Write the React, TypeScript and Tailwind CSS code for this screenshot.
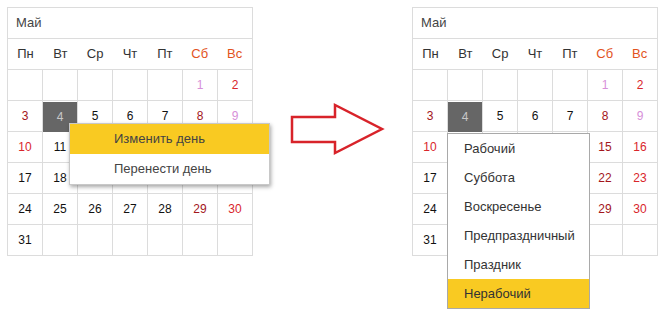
import React from "react";

type Day = { n?: number; kind?: "sat" | "sun" | "pink" | "red" | "sel" };

const weeks: Day[][] = [
  [{}, {}, {}, {}, {}, { n: 1, kind: "pink" }, { n: 2, kind: "sun" }],
  [
    { n: 3, kind: "sat" },
    { n: 4, kind: "sel" },
    { n: 5 },
    { n: 6 },
    { n: 7 },
    { n: 8, kind: "sat" },
    { n: 9, kind: "pink" },
  ],
  [
    { n: 10, kind: "sun" },
    { n: 11 },
    { n: 12 },
    { n: 13 },
    { n: 14 },
    { n: 15, kind: "sat" },
    { n: 16, kind: "sun" },
  ],
  [
    { n: 17 },
    { n: 18 },
    { n: 19 },
    { n: 20 },
    { n: 21 },
    { n: 22, kind: "sat" },
    { n: 23, kind: "sun" },
  ],
  [
    { n: 24 },
    { n: 25 },
    { n: 26 },
    { n: 27 },
    { n: 28 },
    { n: 29, kind: "sat" },
    { n: 30, kind: "sun" },
  ],
  [{ n: 31 }, {}, {}, {}, {}, {}, {}],
];

const dayNames = ["Пн", "Вт", "Ср", "Чт", "Пт", "Сб", "Вс"];

function cellClass(kind?: Day["kind"]) {
  switch (kind) {
    case "sat":
      return "text-[#a3161c]";
    case "sun":
      return "text-[#d9262b]";
    case "pink":
      return "text-[#d78fd9]";
    case "sel":
      return "bg-[#666666] text-[#c8c8c8]";
    default:
      return "text-[#111]";
  }
}

function Calendar({ children }: { children?: React.ReactNode }) {
  return (
    <div className="relative w-[246px] border-t border-l border-[#dcdcdc] bg-white">
      <div className="flex h-[31px] items-center border-r border-b border-[#dcdcdc] pl-[8px] text-[13px] text-[#444]">
        Май
      </div>
      <div className="grid h-[31px] grid-cols-7 border-r border-b border-[#dcdcdc] text-[13px]">
        {dayNames.map((d, i) => (
          <div
            key={d}
            className={`flex items-center justify-center ${
              i >= 5 ? "text-[#e2531d]" : "text-[#333]"
            }`}
          >
            {d}
          </div>
        ))}
      </div>
      {weeks.map((week, wi) => (
        <div key={wi} className="grid grid-cols-7">
          {week.map((day, di) => (
            <div
              key={di}
              className="h-[31px] border-r border-b border-[#dcdcdc]"
            >
              <div
                className={`flex h-full items-center justify-center text-[12px] ${cellClass(
                  day.kind
                )} ${day.kind === "sel" ? "mt-px h-[29px]" : ""}`}
              >
                {day.n}
              </div>
            </div>
          ))}
        </div>
      ))}
      {children}
    </div>
  );
}

export default function App() {
  return (
    <div
      className="flex h-[313px] w-[664px] items-start bg-white pt-[7px] pl-[7px]"
      style={{ fontFamily: '"Liberation Sans", Arial, sans-serif' }}
    >
      <Calendar>
        <div className="absolute top-[115px] left-[61px] w-[201px] border border-[#c8c8c8] bg-white text-[13px] text-[#444] shadow-[1px_2px_4px_rgba(0,0,0,0.35)]">
          <div className="flex h-[30px] items-center bg-[#f9ca22] pl-[44px]">
            Изменить день
          </div>
          <div className="flex h-[30px] items-center pl-[44px]">
            Перенести день
          </div>
        </div>
      </Calendar>

      <svg
        width="96"
        height="60"
        viewBox="0 0 96 60"
        className="mt-[93px] ml-[37px] mr-[26px]"
      >
        <polygon
          points="2,17 45,17 45,5 92,29 45,53 45,42 2,42"
          fill="white"
          stroke="#d8232a"
          strokeWidth="2.5"
        />
      </svg>

      <Calendar>
        <div className="absolute top-[125px] left-[34px] w-[143px] border border-[#a9a9a9] bg-white text-[13px] text-[#333]">
          {[
            "Рабочий",
            "Суббота",
            "Воскресенье",
            "Предпраздничный",
            "Праздник",
            "Нерабочий",
          ].map((t, i) => (
            <div
              key={t}
              className={`flex h-[29px] items-center pl-[16px] ${
                i === 5 ? "bg-[#f9ca22]" : ""
              }`}
            >
              {t}
            </div>
          ))}
        </div>
      </Calendar>
    </div>
  );
}
